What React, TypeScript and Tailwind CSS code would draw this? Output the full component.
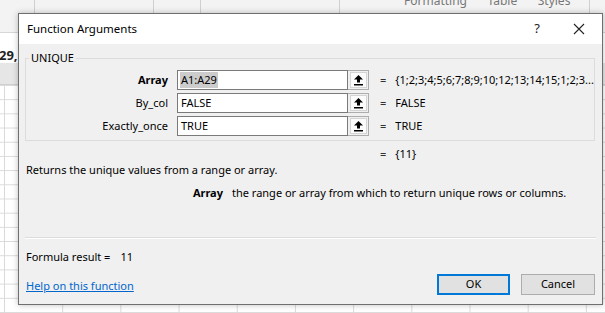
import React from "react";

const FONT = { fontFamily: '"Segoe UI", "Noto Sans", "Liberation Sans", sans-serif' };

function RefButton() {
  return (
    <div className="w-[21px] h-[20px] flex items-center justify-center bg-[#f0f0f0] border border-[#adadad] border-l-0">
      <div className="w-[17px] h-[16px] flex items-center justify-center bg-[#fbfbfb] border border-[#d4d4d4]">
        <svg width="9" height="11" viewBox="0 0 9 11">
          <polygon points="4.5,0 0,4.5 3,4.5 3,7.5 6,7.5 6,4.5 9,4.5" fill="#000" />
          <rect x="0" y="9" width="9" height="1.5" fill="#000" />
        </svg>
      </div>
    </div>
  );
}

interface Arg {
  name: string;
  value: string;
  result: string;
  bold?: boolean;
  selected?: boolean;
}

const ARGS: Arg[] = [
  { name: "Array", value: "A1:A29", result: "{1;2;3;4;5;6;7;8;9;10;12;13;14;15;1;2;3...", bold: true, selected: true },
  { name: "By_col", value: "FALSE", result: "FALSE" },
  { name: "Exactly_once", value: "TRUE", result: "TRUE" },
];

function ArgRow({ arg }: { arg: Arg }) {
  return (
    <div className="flex items-center h-[20px]">
      <div className={`w-[151px] text-right pr-[9px] ${arg.bold ? "font-bold" : ""}`}>{arg.name}</div>
      <div className="w-[171px] h-[20px] bg-white border border-[#7a7a7a] flex items-center pl-[2px]">
        <span className={arg.selected ? "bg-[#cccccc] px-[1px]" : "px-[1px]"}>{arg.value}</span>
      </div>
      <RefButton />
      <div className="pl-[11px] flex items-center">
        <span className="text-[#333]">=</span>
      </div>
      <div className="pl-[9px] whitespace-nowrap">{arg.result}</div>
    </div>
  );
}

function Sheet() {
  return (
    <div className="w-[605px] h-[313px] overflow-hidden bg-white flex flex-col">
      {/* ribbon */}
      <div className="h-[33px] bg-[#f3f3f3] border-b border-[#d6d6d6] flex items-start text-[12px] text-[#777]">
        <div className="w-[35px] h-[13px] border-r border-[#d0d0d0]" />
        <div className="w-[119px] h-[13px] border-r border-[#d0d0d0]" />
        <div className="w-[47px] h-[13px] border-r border-[#d0d0d0]" />
        <div className="w-[139px] h-[13px] border-r border-[#d0d0d0]" />
        <div className="w-[250px] h-[13px] border-r border-[#d0d0d0] flex items-start gap-[14px] pl-[64px] whitespace-nowrap">
          <span className="-mt-[8px]">Formatting ˅</span>
          <span className="-mt-[8px]">Table ˅</span>
          <span className="-mt-[8px]">Styles ˅</span>
        </div>
      </div>
      {/* formula bar */}
      <div className="h-[30px] bg-white flex items-end text-[13px] font-bold text-[#222] whitespace-nowrap">
        <span className="-ml-[1px] leading-[16px]">29,FALSE,TRUE)</span>
      </div>
      {/* column header */}
      <div className="h-[22px] bg-[#e6e6e6] border-b border-[#cfcfcf]" />
      {/* grid */}
      <div className="flex-1 bg-white bg-[linear-gradient(to_right,#dadada_1px,transparent_1px),linear-gradient(to_bottom,#dadada_1px,transparent_1px)] bg-[size:58.2px_14.2px] bg-[position:4px_0px]" />
    </div>
  );
}

export default function App() {
  return (
    <div className="relative w-[605px] h-[313px] overflow-hidden text-[11px] text-black" style={FONT}>
      <Sheet />
      {/* dialog */}
      <div className="absolute left-[18px] top-[13px] w-[585px] h-[292px] bg-[#f0f0f0] border border-[#6f6f6f] shadow-[0_0_6px_rgba(0,0,0,0.25)] flex flex-col">
        <div className="h-[30px] bg-white flex items-center pl-[8px] pr-[12px] shrink-0">
          <span className="flex-1 text-[11.5px]">Function Arguments</span>
          <span className="text-[13px] mr-[33px] text-[#222]">?</span>
          <svg width="12" height="12" viewBox="0 0 12 12" className="mr-[5px]">
            <path d="M1 1 L11 11 M11 1 L1 11" stroke="#222" strokeWidth="1.1" />
          </svg>
        </div>

        <div className="flex-1 flex flex-col px-[6px] pt-[8px]">
          <fieldset className="border border-[#dcdcdc] pt-[6px] pb-[4px] flex flex-col gap-[3px] mr-[1px]">
            <legend className="ml-[3px] px-[2px] leading-[12px] text-[11px]">UNIQUE</legend>
            {ARGS.map(a => (
              <ArgRow key={a.name} arg={a} />
            ))}
          </fieldset>

          <div className="flex h-[16px] items-center mt-[5px]">
            <div className="w-[349px]" />
            <span className="pl-[6px] text-[#333]">=</span>
            <span className="pl-[9px]">{"{11}"}</span>
          </div>

          <div className="pl-[1px] h-[16px] flex items-center">Returns the unique values from a range or array.</div>

          <div className="flex mt-[7px] h-[16px] items-center">
            <div className="w-[207px] text-right font-bold pr-[9px]">Array</div>
            <div>the range or array from which to return unique rows or columns.</div>
          </div>

          <div className="mt-[36px] border-t border-[#dcdcdc] border-b border-b-white" />

          <div className="pl-[1px] mt-[10px] h-[16px] flex items-center">
            <span>Formula result =</span>
            <span className="ml-[10px]">11</span>
          </div>

          <div className="flex items-center mt-[9px]">
            <div className="flex-1 pt-[3px]">
              <a href="#" className="pl-[1px] text-[#0066cc] underline">Help on this function</a>
            </div>
            <button className="w-[73px] h-[21px] bg-[#e1e1e1] border-2 border-[#0078d7] flex items-center justify-center text-[11px] mr-[11px]">OK</button>
            <button className="w-[74px] h-[21px] bg-[#e1e1e1] border border-[#adadad] flex items-center justify-center text-[11px] mr-[1px]">Cancel</button>
          </div>
        </div>
      </div>
    </div>
  );
}
